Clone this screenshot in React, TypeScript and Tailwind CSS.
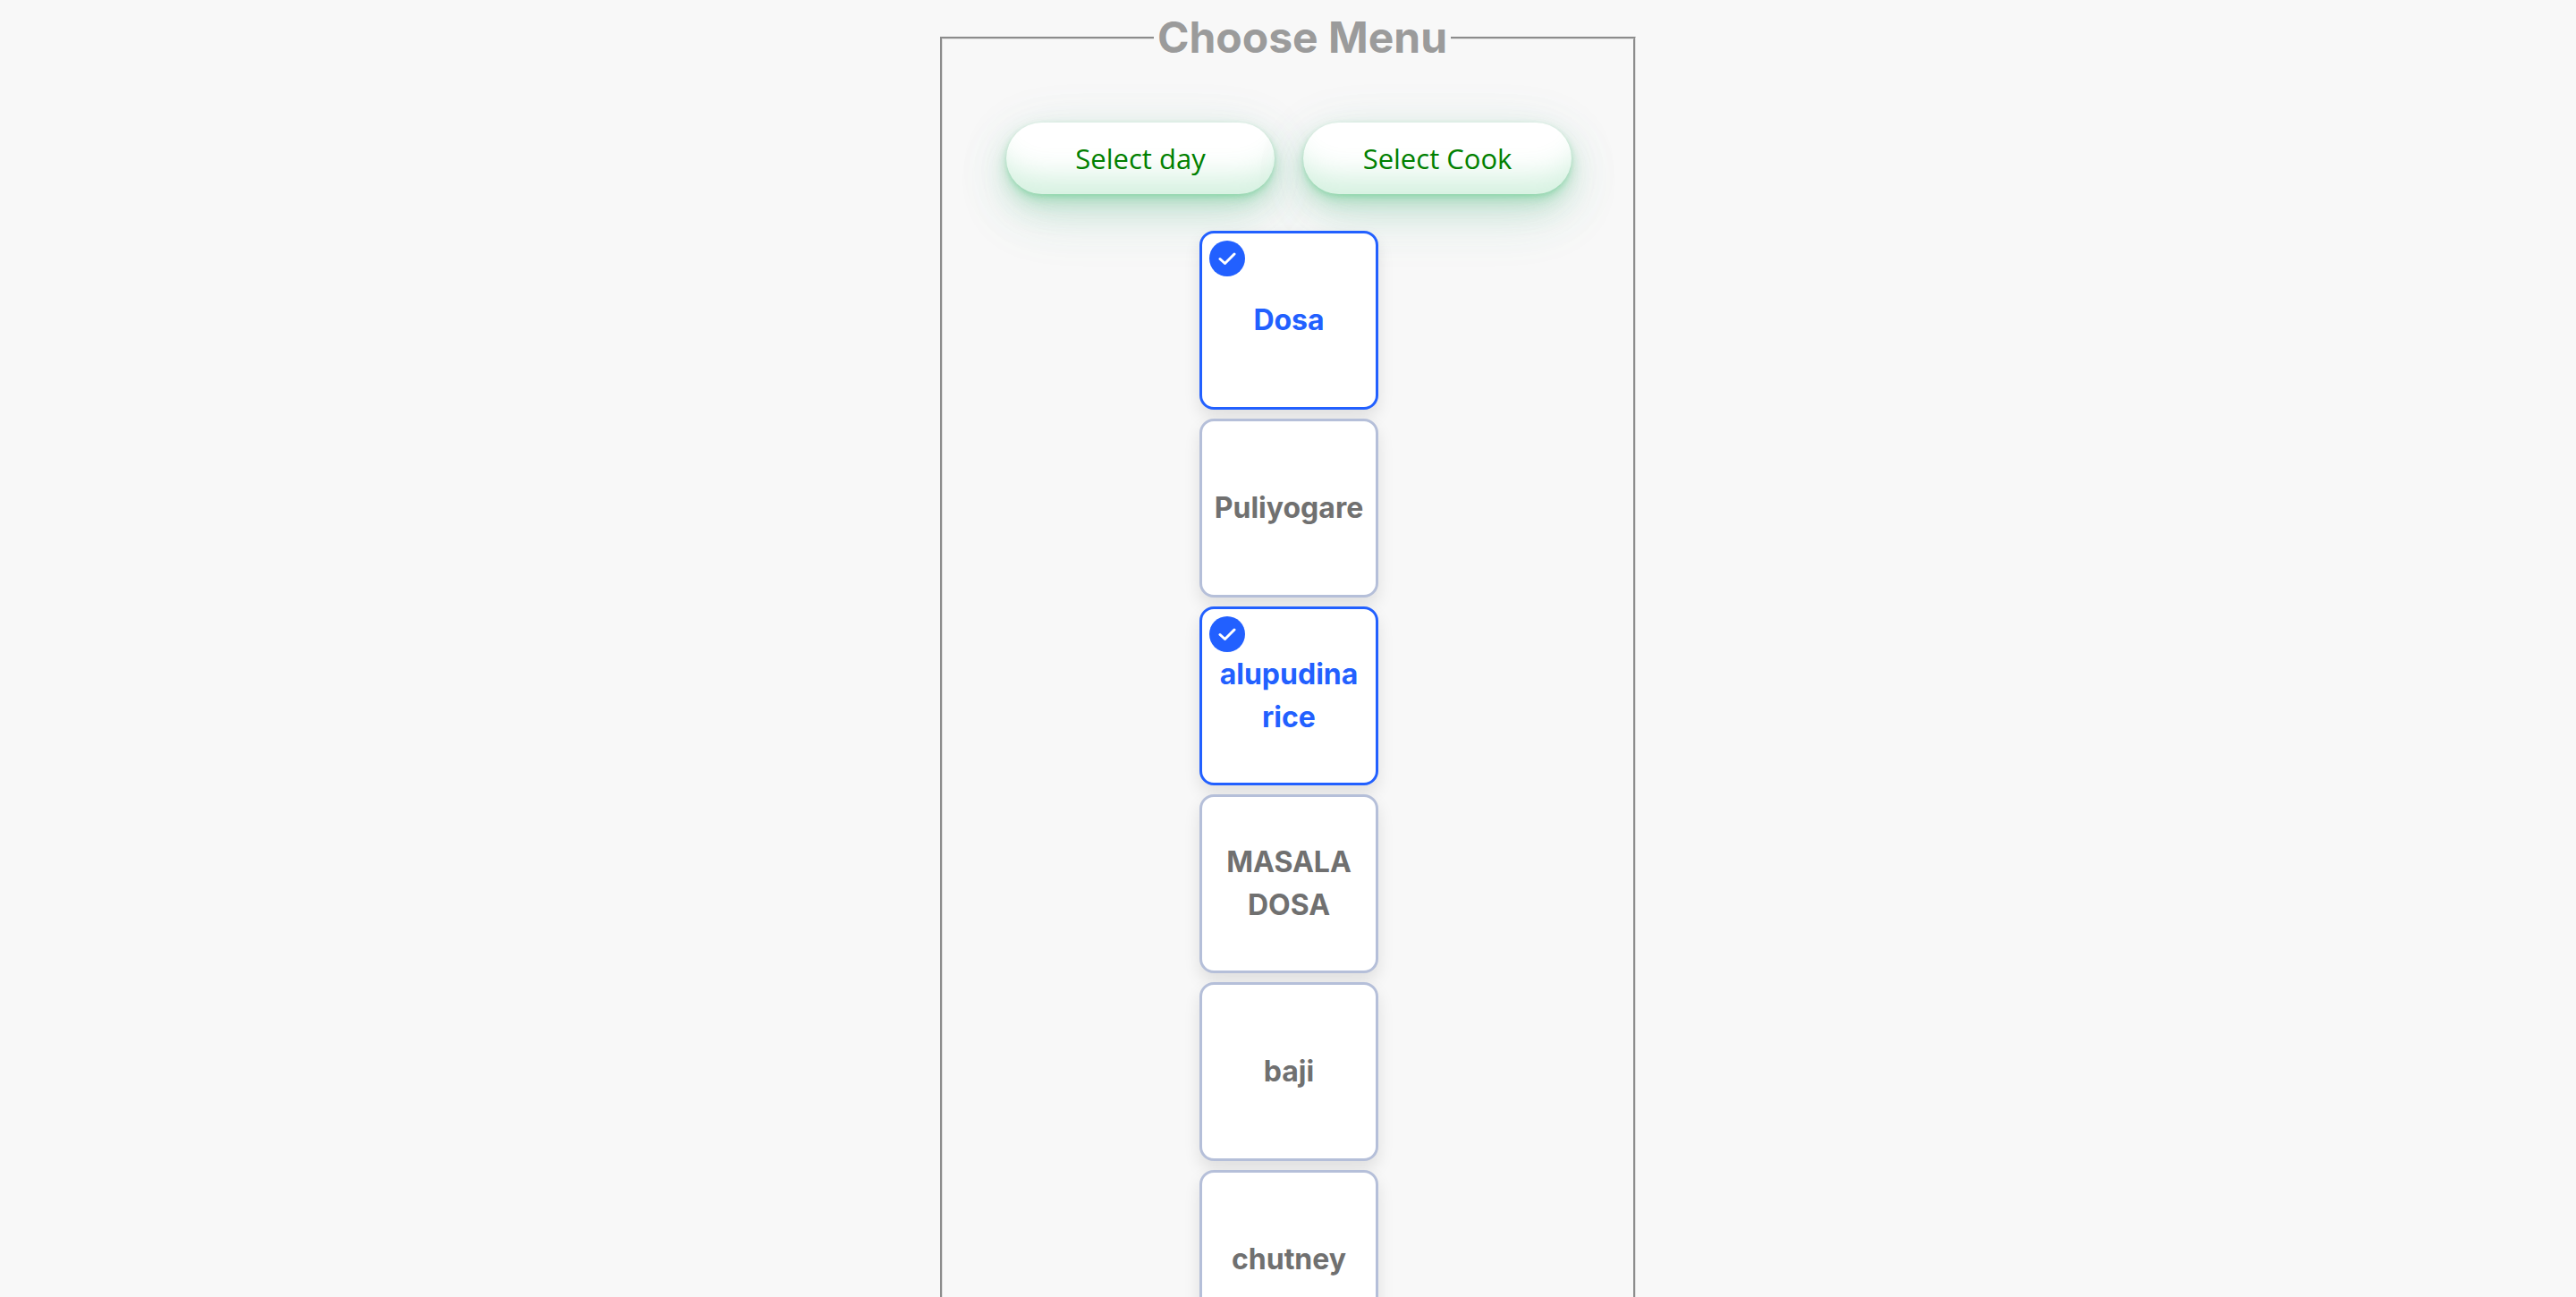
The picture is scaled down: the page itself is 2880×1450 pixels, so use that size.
import { useState } from "react";

const dishes = ["Dosa", "Puliyogare", "alupudina rice", "MASALA DOSA", "baji", "chutney"];

function PillButton({ label }: { label: string }) {
  return (
    <button
      type="button"
      className="h-20 w-[300px] rounded-full bg-white text-center font-['Open_Sans',sans-serif] text-[31px] leading-10 text-[#008000] shadow-[inset_0_-45px_32px_-25px_rgba(44,187,99,0.2),0_2px_4px_rgba(44,187,99,0.15),0_4px_8px_rgba(44,187,99,0.15),0_8px_16px_rgba(44,187,99,0.15),0_16px_32px_rgba(44,187,99,0.15),0_24px_64px_rgba(60,170,110,0.12),0_12px_64px_rgba(100,150,180,0.1)]"
    >
      {label}
    </button>
  );
}

function DishTile({ name, checked, onToggle }: { name: string; checked: boolean; onToggle: () => void }) {
  return (
    <label
      className={
        "relative flex size-[200px] cursor-pointer items-center justify-center rounded-2xl border-3 bg-white text-center text-[32px] leading-12 font-bold shadow-[0_9px_18px_rgba(0,0,0,0.1)] " +
        (checked ? "border-[#2260ff] text-[#2260ff]" : "border-[#b5bfd9] text-[#707070]")
      }
    >
      <input type="checkbox" className="sr-only" checked={checked} onChange={onToggle} />
      {checked && (
        <span className="absolute top-2 left-2 flex size-10 items-center justify-center rounded-full bg-[#2260ff]">
          <svg viewBox="0 0 20 16" className="h-4 w-5" fill="none" stroke="white" strokeWidth="3" strokeLinecap="round" strokeLinejoin="round">
            <path d="M2 8.5 L7.5 13.5 L18 3" />
          </svg>
        </span>
      )}
      <span className="w-full">{name}</span>
    </label>
  );
}

export default function App() {
  const [selected, setSelected] = useState<string[]>(["Dosa", "alupudina rice"]);
  const toggle = (name: string) =>
    setSelected((prev) => (prev.includes(name) ? prev.filter((n) => n !== name) : [...prev, name]));

  return (
    <main className="h-screen overflow-hidden bg-[#f8f8f8] pt-[14px] font-['Inter',sans-serif]">
      <fieldset className="mx-auto w-[27%] min-w-[720px] border-3 border-[#e0e0e0] pb-10 pl-8 [border-style:groove]">
        <legend className="mx-auto px-1 text-5xl leading-[56px] font-bold text-[#9b9b9b]">Choose Menu</legend>
        <div className="mt-[67px] flex justify-center gap-8 pr-[30px]">
          <PillButton label="Select day" />
          <PillButton label="Select Cook" />
        </div>
        <div className="relative mt-[41px] flex flex-col items-center gap-[10px] pr-[30px]">
          {dishes.map((d) => (
            <DishTile key={d} name={d} checked={selected.includes(d)} onToggle={() => toggle(d)} />
          ))}
        </div>
      </fieldset>
    </main>
  );
}
